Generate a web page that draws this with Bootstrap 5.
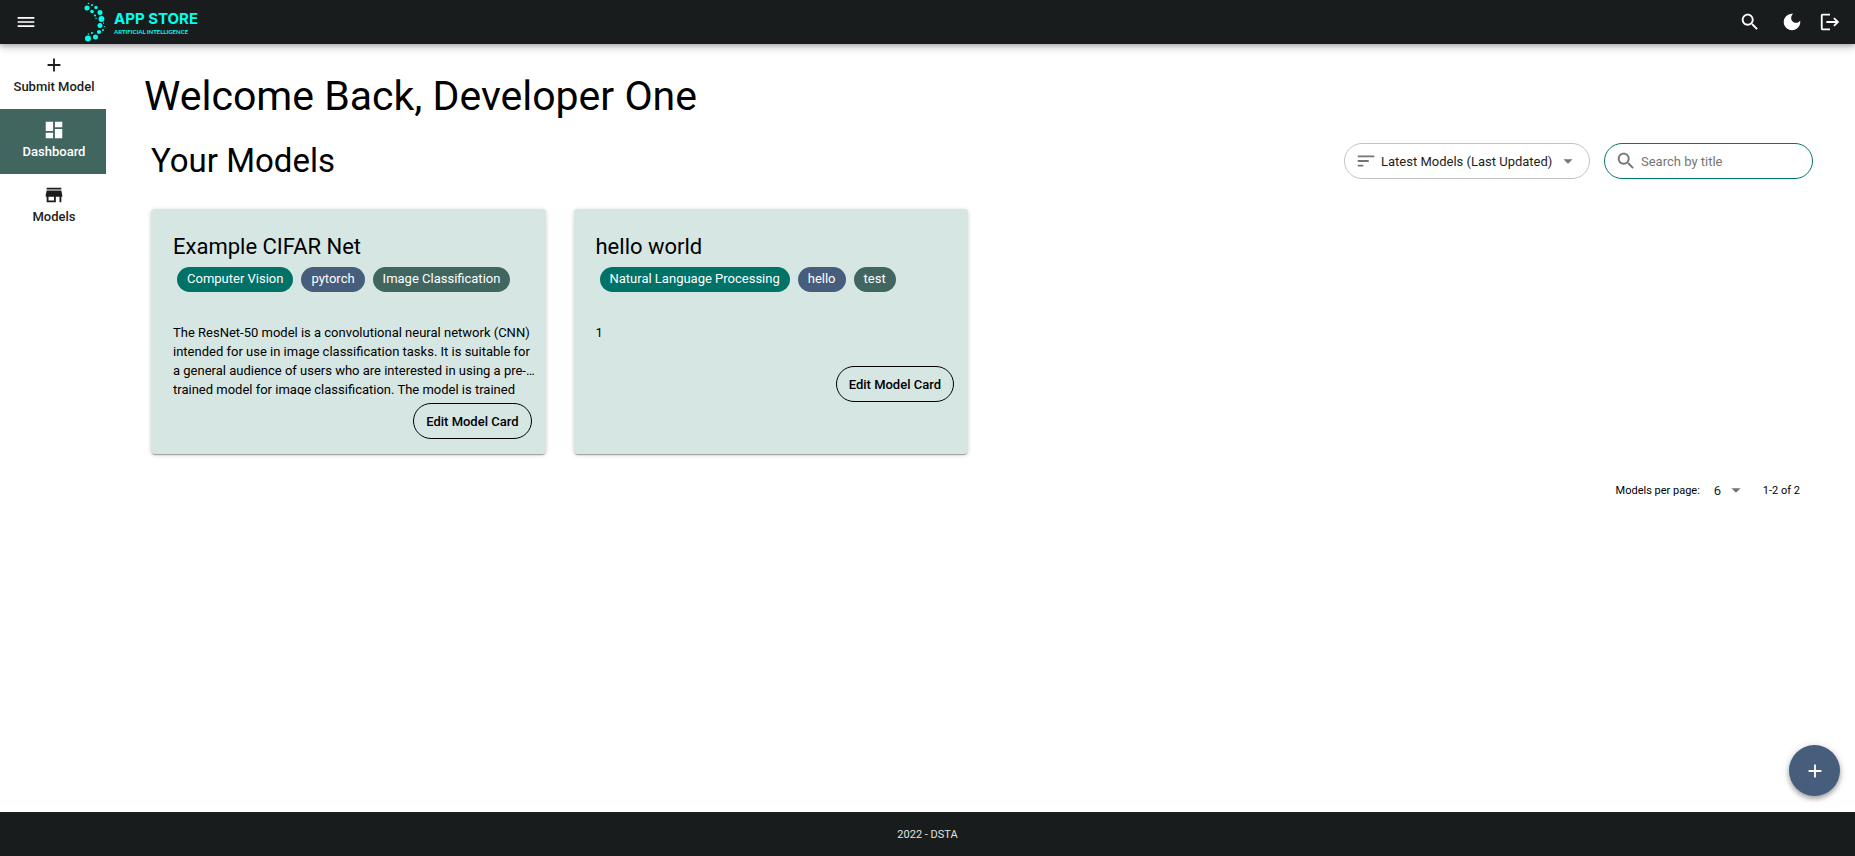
<!DOCTYPE html>
<html lang="en">
<head>
<meta charset="utf-8">
<meta name="viewport" content="width=device-width, initial-scale=1">
<title>App Store - Dashboard</title>
<link href="https://cdn.jsdelivr.net/npm/bootstrap@5.3.0/dist/css/bootstrap.min.css" rel="stylesheet">
<style>
  body { font-family: Roboto, "Liberation Sans", sans-serif; font-size: 13px; line-height: 19px; color: #000; background: #fff; }
  svg { fill: currentColor; flex: none; display: block; }
  .topbar { height: 44px; background: #191c1c; color: #fff; box-shadow: 0 2px 4px rgba(0,0,0,.2), 0 4px 8px rgba(0,0,0,.16); z-index: 5; }
  .topbar-tools { margin-right: 14px; }
  .icon-btn { background: none; border: 0; padding: 0; color: inherit; }
  .brand { color: #00fff0; text-decoration: none; margin-left: 48px; }
  .brand-name { font-family: Inter, sans-serif; font-size: 15px; line-height: 18px; font-weight: 700; }
  .brand-sub { font-family: Lato, sans-serif; font-size: 6px; line-height: 7px; font-weight: 700; }
  .side { width: 106px; flex: none; }
  .side a { height: 65px; color: #1d1d1d; text-decoration: none; font-weight: 500; padding: 10px 0 0 2px; gap: 1px; }
  .side a.active { background: #41665f; color: #fff; }
  .content { padding: 30px 42px 0 45px; }
  h1 { font-size: 41px; line-height: 44px; font-weight: 400; margin: 0 0 0 -7px; }
  h2 { font-size: 33px; line-height: 36px; font-weight: 400; margin: 0; }
  .filters { margin-top: 25px; }
  .filter-group { gap: 14px; }
  .pill { height: 36px; border: 1px solid #c2c2c2; border-radius: 18px; color: #757575; padding: 0 10px; }
  .pill select, .pill input, .pager select { border: 0; outline: 0; background: none; appearance: none; padding: 0; color: #1d1d1d; min-width: 0; }
  .pill-search { border-color: #00756a; width: 209px; }
  .pill-search input::placeholder { color: #757575; opacity: 1; }
  .model-card { background: #d6e6e3; border: 0; border-radius: 4px; min-height: 245px; box-shadow: 0 1px 4px rgba(0,0,0,.2), 0 2px 1px -1px rgba(0,0,0,.3); padding: 22px 14px 14px 22px; }
  .model-card h3 { font-size: 22px; line-height: 32px; font-weight: 400; margin: 0; }
  .tag { height: 25px; border-radius: 13px; padding: 2px 10px; color: #fff; }
  .tag-task { background: #007267; }
  .tag-lib { background: #465d7c; }
  .tag-kind { background: #41665f; }
  .desc { display: -webkit-box; -webkit-box-orient: vertical; -webkit-line-clamp: 3; overflow: hidden; margin: 31px -6px 0 0; }
  .desc-long { height: 72px; }
  .edit { height: 36px; border: 1px solid #000; border-radius: 18px; background: none; padding: 0 12px; font-weight: 500; color: #000; }
  .cards { --bs-gutter-x: 28px; margin-top: 30px; }
  .pager { font-size: 11px; margin-top: 25px; padding-right: 13px; }
  .pager label { margin-right: 14px; }
  .pager select { font-size: 13px; width: 11px; }
  .fab { position: fixed; right: 15px; bottom: 60px; width: 51px; height: 51px; border: 0; border-radius: 50%; background: #465d7c; color: #fff; box-shadow: 0 3px 5px rgba(0,0,0,.3), 0 1px 8px rgba(0,0,0,.15); }
  .foot { height: 44px; background: #191c1c; color: #e0e3e1; font-size: 11px; }
</style>
</head>
<body class="d-flex flex-column min-vh-100">
<header class="topbar d-flex align-items-center sticky-top">
  <button class="icon-btn ms-3" aria-label="Menu"><svg width="20" height="20" viewBox="0 0 24 24"><path d="M2 18h20v-2H2v2zm0-5h20v-2H2v2zm0-7v2h20V6H2z"/></svg></button>
  <a class="brand d-flex align-items-center gap-2" href="#">
    <svg width="22" height="42" viewBox="0 0 22 42">
      <circle cx="3" cy="7" r="2.5"/><circle cx="4.500" cy="2.500" r=".8"/><circle cx="8" cy="4" r="1"/><circle cx="12" cy="6.500" r="1.700"/><circle cx="8" cy="10.500" r="1.800"/><circle cx="16" cy="11.500" r="2.500"/><circle cx="11" cy="14.500" r="1.100"/><circle cx="12" cy="17.300" r=".7"/><circle cx="17.500" cy="18" r="2.900"/><circle cx="19.500" cy="22" r=".7"/><circle cx="16" cy="24.500" r="2.500"/><circle cx="20.500" cy="25.500" r=".6"/><circle cx="19" cy="29" r="1"/><circle cx="15" cy="31" r="2.100"/><circle cx="8" cy="32" r="1.100"/><circle cx="4.500" cy="33" r=".8"/><circle cx="11.500" cy="36" r="2.500"/><circle cx="4" cy="37.500" r="3"/>
    </svg>
    <span class="d-flex flex-column"><span class="brand-name">APP STORE</span><span class="brand-sub">ARTIFICIAL INTELLIGENCE</span></span>
  </a>
  <div class="topbar-tools ms-auto d-flex align-items-center">
    <button class="icon-btn me-3" aria-label="Search"><svg width="22" height="22" viewBox="0 0 24 24"><path d="M15.500 14h-.79l-.28-.27C15.410 12.590 16 11.110 16 9.500 16 5.910 13.090 3 9.500 3S3 5.910 3 9.500 5.910 16 9.500 16c1.610 0 3.090-.59 4.230-1.570l.27.28v.79l5 4.990L20.490 19l-4.990-5zm-6 0C7.010 14 5 11.990 5 9.500S7.010 5 9.500 5 14 7.010 14 9.500 11.990 14 9.500 14z"/></svg></button>
    <button class="icon-btn me-3 ms-1" aria-label="Dark mode"><svg width="22" height="22" viewBox="0 0 24 24"><path d="M12 3c-4.970 0-9 4.030-9 9s4.030 9 9 9 9-4.030 9-9c0-.46-.04-.92-.1-1.360-.98 1.370-2.580 2.260-4.400 2.260-2.980 0-5.400-2.420-5.400-5.400 0-1.810.89-3.420 2.260-4.400C12.920 3.040 12.460 3 12 3z"/></svg></button>
    <button class="icon-btn" aria-label="Log out"><svg width="22" height="22" viewBox="0 0 24 24"><path d="M17 7l-1.410 1.410L18.170 11H8v2h10.170l-2.580 2.580L17 17l5-5zM4 5h8V3H4c-1.100 0-2 .9-2 2v14c0 1.100.9 2 2 2h8v-2H4V5z"/></svg></button>
  </div>
</header>
<div class="d-flex flex-grow-1">
  <nav class="side">
    <a href="#" class="d-flex flex-column align-items-center"><svg width="22" height="22" viewBox="0 0 24 24"><path d="M19 13h-6v6h-2v-6H5v-2h6V5h2v6h6v2z"/></svg>Submit Model</a>
    <a href="#" class="active d-flex flex-column align-items-center" aria-current="page"><svg width="22" height="22" viewBox="0 0 24 24"><path d="M3 13h8V3H3v10zm0 8h8v-6H3v6zm10 0h8V11h-8v10zm0-18v6h8V3h-8z"/></svg>Dashboard</a>
    <a href="#" class="d-flex flex-column align-items-center"><svg width="22" height="22" viewBox="0 0 24 24"><path d="M20 4H4v2h16V4zm1 10v-2l-1-5H4l-1 5v2h1v6h10v-6h4v6h2v-6h1zm-9 4H6v-4h6v4z"/></svg>Models</a>
  </nav>
  <main class="content flex-grow-1">
    <h1>Welcome Back, Developer One</h1>
    <div class="filters d-flex align-items-center">
      <h2 class="flex-grow-1">Your Models</h2>
      <div class="filter-group d-flex">
        <label class="pill d-flex align-items-center"><svg width="22" height="22" viewBox="0 0 24 24"><path d="M3 18h6v-2H3v2zM3 6v2h18V6H3zm0 7h12v-2H3v2z"/></svg>
          <select class="ms-1" aria-label="Sort models"><option>Latest Models (Last Updated)</option></select>
          <svg class="ms-1" width="22" height="22" viewBox="0 0 24 24"><path d="M7 10l5 5 5-5z"/></svg></label>
        <label class="pill pill-search d-flex align-items-center"><svg width="22" height="22" viewBox="0 0 24 24"><path d="M15.500 14h-.79l-.28-.27C15.410 12.590 16 11.110 16 9.500 16 5.910 13.090 3 9.500 3S3 5.910 3 9.500 5.910 16 9.500 16c1.610 0 3.090-.59 4.230-1.570l.27.28v.79l5 4.990L20.490 19l-4.990-5zm-6 0C7.010 14 5 11.990 5 9.500S7.010 5 9.500 5 14 7.010 14 9.500 11.990 14 9.500 14z"/></svg>
          <input class="ms-1 flex-grow-1" type="search" placeholder="Search by title" aria-label="Search by title"></label>
      </div>
    </div>
    <div class="row row-cols-4 cards">
      <div class="col">
        <article class="card model-card">
          <h3>Example CIFAR Net</h3>
          <div class="d-flex gap-2 ms-1 mt-1"><span class="tag tag-task">Computer Vision</span><span class="tag tag-lib">pytorch</span><span class="tag tag-kind">Image Classification</span></div>
          <p class="desc desc-long">The ResNet-50 model is a convolutional neural network (CNN) intended for use in image classification tasks. It is suitable for a general audience of users who are interested in using a pre-trained model for image classification. The model is trained</p>
          <button class="edit align-self-end mt-2">Edit Model Card</button>
        </article>
      </div>
      <div class="col">
        <article class="card model-card">
          <h3>hello world</h3>
          <div class="d-flex gap-2 ms-1 mt-1"><span class="tag tag-task">Natural Language Processing</span><span class="tag tag-lib">hello</span><span class="tag tag-kind">test</span></div>
          <p class="desc mb-3">1</p>
          <button class="edit align-self-end mt-2">Edit Model Card</button>
        </article>
      </div>
    </div>
    <div class="pager d-flex justify-content-end align-items-center">
      <label for="perPage">Models per page:</label>
      <select id="perPage"><option>6</option></select>
      <svg class="me-3" width="22" height="22" viewBox="0 0 24 24" color="#757575"><path d="M7 10l5 5 5-5z"/></svg>
      <span>1-2 of 2</span>
    </div>
  </main>
</div>
<button class="fab d-flex align-items-center justify-content-center" aria-label="Add model"><svg width="22" height="22" viewBox="0 0 24 24"><path d="M19 13h-6v6h-2v-6H5v-2h6V5h2v6h6v2z"/></svg></button>
<footer class="foot d-flex align-items-center justify-content-center">2022 - DSTA</footer>
<script src="https://cdn.jsdelivr.net/npm/bootstrap@5.3.0/dist/js/bootstrap.bundle.min.js"></script>
</body>
</html>
